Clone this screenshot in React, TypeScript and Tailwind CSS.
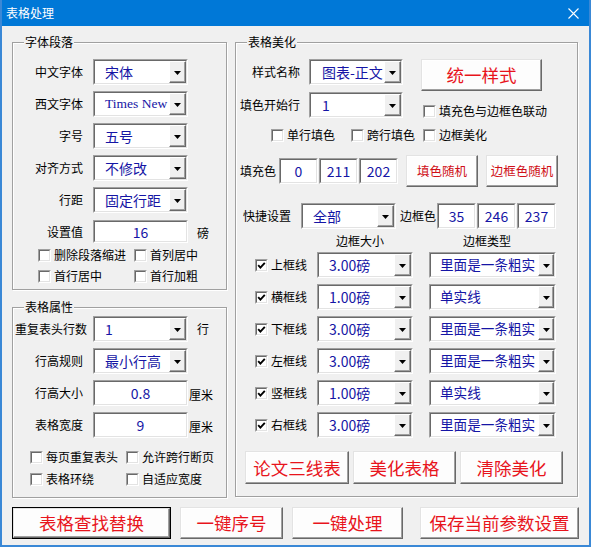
import React from "react";

const Arrow = ({ w = "w-[17px]" }: { w?: string }) => (
  <div className={`${w} h-full shrink-0 bg-[#f0f0f0] border border-t-white border-l-white border-b-[#696969] border-r-[#696969] shadow-[inset_-1px_-1px_0_#a0a0a0] flex items-center justify-center`}>
    <svg width="7" height="4" viewBox="0 0 7 4" className="mt-[2px]">
      <path d="M0 0 H7 L3.5 4 Z" fill="#000" />
    </svg>
  </div>
);

const Sunken = ({ className, children }: { className: string; children?: React.ReactNode }) => (
  <div className={`shrink-0 border border-t-[#a0a0a0] border-l-[#a0a0a0] border-b-white border-r-white ${className}`}>
    <div className="h-full w-full border border-t-[#696969] border-l-[#696969] border-b-[#e3e3e3] border-r-[#e3e3e3] bg-white flex items-center overflow-hidden">
      {children}
    </div>
  </div>
);

const Dropdown = ({
  className,
  text,
  pad = "pl-[10px] text-[14px]",
  arrow = "w-[17px]",
}: {
  className: string;
  text: string;
  pad?: string;
  arrow?: string;
}) => (
  <Sunken className={className}>
    <div className={`flex-1 min-w-0 h-full flex items-center whitespace-nowrap overflow-hidden leading-none text-[#1515a5] ${pad}`}>
      {text}
    </div>
    <Arrow w={arrow} />
  </Sunken>
);

const Input = ({ className, text }: { className: string; text: string }) => (
  <Sunken className={className}>
    <div className="flex-1 text-center text-[14px] leading-none text-[#1515a5]">{text}</div>
  </Sunken>
);

const Box = ({ checked }: { checked?: boolean }) => (
  <div className="w-[13px] h-[13px] shrink-0 border border-t-[#a0a0a0] border-l-[#a0a0a0] border-b-white border-r-white">
    <div className="w-full h-full border border-t-[#696969] border-l-[#696969] border-b-[#e3e3e3] border-r-[#e3e3e3] bg-white flex items-center justify-center">
      {checked && (
        <svg width="9" height="9" viewBox="0 0 9 9">
          <path d="M1.2 4.2 L3.4 6.6 L7.8 1.8" fill="none" stroke="#000" strokeWidth="1.9" />
        </svg>
      )}
    </div>
  </div>
);

const Check = ({ label, checked, className = "" }: { label: string; checked?: boolean; className?: string }) => (
  <div className={`flex items-center shrink-0 ${className}`}>
    <Box checked={checked} />
    <span className="ml-[3px] text-[12px] leading-none whitespace-nowrap">{label}</span>
  </div>
);

const Btn = ({ className, text, small }: { className: string; text: string; small?: boolean }) => (
  <div
    className={`shrink-0 flex items-center justify-center bg-[#fdfdfd] border border-t-[#e3e3e3] border-l-[#e3e3e3] border-b-[#696969] border-r-[#696969] shadow-[inset_-1px_-1px_0_#a0a0a0,inset_1px_1px_0_#ffffff] whitespace-nowrap leading-none ${
      small ? "text-[12.5px] text-[#d01018]" : "text-[17.5px] text-[#e8141c]"
    } ${className}`}
  >
    {text}
  </div>
);

const Group = ({ title, className, children }: { title: string; className: string; children?: React.ReactNode }) => (
  <div className={`relative shrink-0 border border-[#a0a0a0] shadow-[inset_1px_1px_0_#ffffff,1px_1px_0_#ffffff] ${className}`}>
    <span className="absolute left-[11px] -top-[9px] px-[1px] bg-[#f0f0f0] text-[12px] leading-[16px]">{title}</span>
    {children}
  </div>
);

const Label = ({ className, text }: { className: string; text: string }) => (
  <div className={`shrink-0 text-[12px] leading-none whitespace-nowrap ${className}`}>{text}</div>
);

const borderRows: [string, string, string][] = [
  ["上框线", "3.00磅", "里面是一条粗实"],
  ["横框线", "1.00磅", "单实线"],
  ["下框线", "3.00磅", "里面是一条粗实"],
  ["左框线", "3.00磅", "里面是一条粗实"],
  ["竖框线", "1.00磅", "单实线"],
  ["右框线", "3.00磅", "里面是一条粗实"],
];

export default function App() {
  return (
    <div className="w-[591px] h-[548px] bg-white font-['Noto_Sans_CJK_SC',sans-serif] text-black">
      <div className="w-[591px] h-[547px] flex flex-col border-x-2 border-b-2 border-[#3a88d6] bg-[#f0f0f0]">
        {/* title bar */}
        <div className="h-[26px] shrink-0 bg-[#0078d7] flex items-center justify-between pl-[4px] pr-[10px]">
          <span className="text-white text-[12px] leading-none">表格处理</span>
          <svg width="11" height="11" viewBox="0 0 11 11">
            <path d="M0.5 0.5 L10.5 10.5 M10.5 0.5 L0.5 10.5" stroke="#fff" strokeWidth="1.1" />
          </svg>
        </div>

        <div className="flex flex-col pl-[10px] pt-[16px]">
          <div className="flex items-start">
            {/* left column */}
            <div className="flex flex-col w-[215px] shrink-0">
              <Group title="字体段落" className="h-[248px]">
                <div className="flex flex-col pt-[16px]">
                  <div className="flex flex-col gap-[6px]">
                    {[
                      ["中文字体", "宋体"],
                      ["西文字体", "Times New"],
                      ["字号", "五号"],
                      ["对齐方式", "不修改"],
                      ["行距", "固定行距"],
                    ].map(([l, v]) => (
                      <div key={l} className="flex items-center h-[26px]">
                        <Label className="w-[70px] text-right" text={l} />
                        {v === "Times New" ? (
                          <Dropdown
                            className="ml-[10px] w-[95px] h-[26px]"
                            text="Times New"
                            pad="pl-[10px] text-[13.5px] font-['Liberation_Serif',serif]"
                          />
                        ) : (
                          <Dropdown className="ml-[10px] w-[95px] h-[26px]" text={v} />
                        )}
                      </div>
                    ))}
                  </div>
                  <div className="flex items-center h-[23px] mt-[7px]">
                    <Label className="w-[70px] text-right" text="设置值" />
                    <Input className="ml-[10px] w-[95px] h-[23px]" text="16" />
                    <Label className="ml-[9px] mt-[3px]" text="磅" />
                  </div>
                  <div className="flex items-center h-[18px] mt-[3px] pl-[25px]">
                    <Check className="w-[96px]" label="删除段落缩进" />
                    <Check label="首列居中" />
                  </div>
                  <div className="flex items-center h-[18px] mt-[3px] pl-[25px]">
                    <Check className="w-[96px]" label="首行居中" />
                    <Check label="首行加粗" />
                  </div>
                </div>
              </Group>

              <Group title="表格属性" className="mt-[17px] h-[191px]">
                <div className="flex flex-col pt-[8px]">
                  <div className="flex items-center h-[26px]">
                    <Label className="ml-[2px] w-[78px]" text="重复表头行数" />
                    <Dropdown className="w-[95px] h-[26px]" text="1" />
                    <Label className="ml-[9px]" text="行" />
                  </div>
                  <div className="flex items-center h-[26px] mt-[6px]">
                    <Label className="w-[70px] text-right" text="行高规则" />
                    <Dropdown className="ml-[10px] w-[95px] h-[26px]" text="最小行高" />
                  </div>
                  <div className="flex items-center h-[26px] mt-[6px]">
                    <Label className="w-[70px] text-right" text="行高大小" />
                    <Input className="ml-[10px] w-[95px] h-[26px]" text="0.8" />
                    <Label className="ml-[1px] mt-[3px]" text="厘米" />
                  </div>
                  <div className="flex items-center h-[26px] mt-[6px]">
                    <Label className="w-[70px] text-right" text="表格宽度" />
                    <Input className="ml-[10px] w-[95px] h-[26px]" text="9" />
                    <Label className="ml-[1px] mt-[3px]" text="厘米" />
                  </div>
                  <div className="flex items-center h-[18px] mt-[10px] pl-[17px]">
                    <Check className="w-[96px]" label="每页重复表头" />
                    <Check label="允许跨行断页" />
                  </div>
                  <div className="flex items-center h-[18px] mt-[4px] pl-[17px]">
                    <Check className="w-[96px]" label="表格环绕" />
                    <Check label="自适应宽度" />
                  </div>
                </div>
              </Group>
            </div>

            {/* right group */}
            <Group title="表格美化" className="ml-[8px] w-[343px] h-[455px]">
              <div className="flex flex-col pt-[16px]">
                <div className="flex items-start">
                  <div className="flex flex-col">
                    <div className="flex items-center h-[26px]">
                      <Label className="w-[64px] text-right" text="样式名称" />
                      <Dropdown className="ml-[9px] w-[94px] h-[26px]" text="图表-正文" pad="pl-[11px] text-[14px]" />
                    </div>
                    <div className="flex items-center h-[26px] mt-[7px]">
                      <Label className="w-[64px] text-right" text="填色开始行" />
                      <Dropdown className="ml-[9px] w-[94px] h-[26px]" text="1" pad="pl-[11px] text-[14px]" />
                    </div>
                  </div>
                  <div className="flex flex-col ml-[18px]">
                    <Btn className="w-[121px] h-[32px]" text="统一样式" />
                    <div className="flex items-center h-[18px] mt-[11px] pl-[2px]">
                      <Check label="填充色与边框色联动" />
                    </div>
                  </div>
                </div>

                <div className="flex items-center h-[18px] mt-[6px] pl-[35px]">
                  <Check className="w-[80px]" label="单行填色" />
                  <Check className="w-[72px]" label="跨行填色" />
                  <Check label="边框美化" />
                </div>

                <div className="flex items-center h-[32px] mt-[11px] pl-[4px]">
                  <Label className="w-[36px]" text="填充色" />
                  <div className="flex ml-[3px] gap-[1px]">
                    <Input className="w-[39px] h-[26px]" text="0" />
                    <Input className="w-[39px] h-[26px]" text="211" />
                    <Input className="w-[39px] h-[26px]" text="202" />
                  </div>
                  <Btn className="ml-[8px] w-[72px] h-[32px]" text="填色随机" small />
                  <Btn className="ml-[8px] w-[72px] h-[32px]" text="边框色随机" small />
                </div>

                <div className="flex items-center h-[26px] mt-[16px] pl-[7px]">
                  <Label className="w-[48px]" text="快捷设置" />
                  <Dropdown className="ml-[10px] w-[95px] h-[26px]" text="全部" />
                  <Label className="ml-[4px] w-[36px]" text="边框色" />
                  <div className="flex ml-[1px] gap-[1px]">
                    <Input className="w-[39px] h-[26px]" text="35" />
                    <Input className="w-[39px] h-[26px]" text="246" />
                    <Input className="w-[39px] h-[26px]" text="237" />
                  </div>
                </div>

                <div className="flex items-center h-[16px] mt-[4px]">
                  <Label className="ml-[100px] w-[48px]" text="边框大小" />
                  <Label className="ml-[79px] w-[48px]" text="边框类型" />
                </div>

                <div className="flex flex-col gap-[6px] mt-[3px]">
                  {borderRows.map(([l, s, t]) => (
                    <div key={l} className="flex items-center h-[26px] pl-[19px]">
                      <Check label={l} checked />
                      <Dropdown className="ml-[10px] w-[96px] h-[26px]" text={s} />
                      <Dropdown
                        className="ml-[16px] w-[127px] h-[26px]"
                        text={t}
                        pad="pl-[9px] text-[13.6px]"
                        arrow="w-[16px]"
                      />
                    </div>
                  ))}
                </div>

                <div className="flex mt-[13px] pl-[9px] gap-[4px]">
                  <Btn className="w-[104px] h-[33px]" text="论文三线表" />
                  <Btn className="w-[103px] h-[33px]" text="美化表格" />
                  <Btn className="w-[103px] h-[33px]" text="清除美化" />
                </div>
              </div>
            </Group>
          </div>

          {/* bottom buttons */}
          <div className="flex mt-[9px] h-[32px]">
            <div className="w-[159px] h-[32px] shrink-0 border border-black flex">
              <Btn className="w-full h-full" text="表格查找替换" />
            </div>
            <Btn className="ml-[9px] w-[103px] h-[32px]" text="一键序号" />
            <Btn className="ml-[9px] w-[111px] h-[32px]" text="一键处理" />
            <Btn className="ml-[17px] w-[159px] h-[32px]" text="保存当前参数设置" />
          </div>
        </div>
      </div>
    </div>
  );
}
